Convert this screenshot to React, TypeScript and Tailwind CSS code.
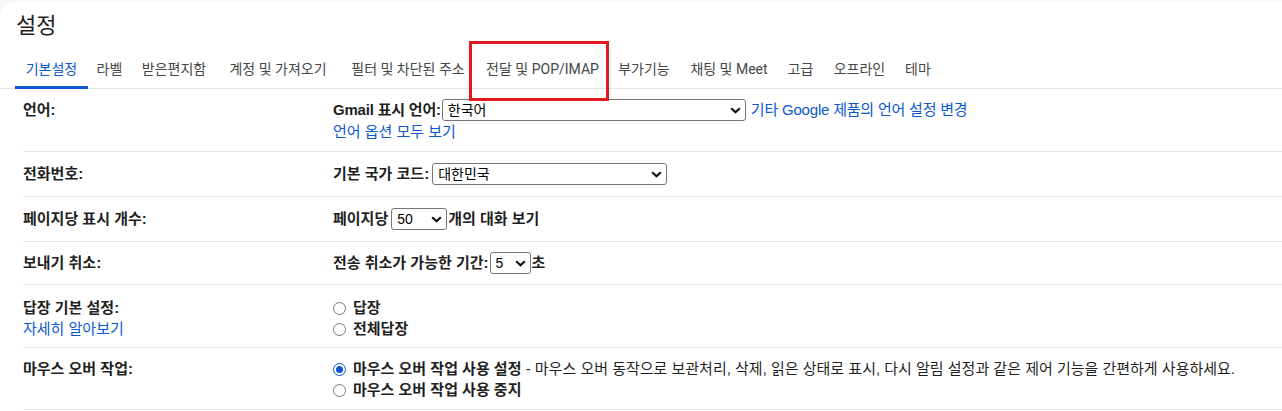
import React from "react";

const body = { fontFamily: '"Liberation Sans", Arial, "Noto Sans CJK KR", sans-serif' };
const tabFont = { fontFamily: 'Roboto, "Noto Sans CJK KR", sans-serif' };

function Chevron() {
  return (
    <svg width="11" height="7" viewBox="0 0 11 7" className="shrink-0">
      <path d="M1.2 1.2 L5.5 5.3 L9.8 1.2" fill="none" stroke="#111" strokeWidth="2.2" />
    </svg>
  );
}

function Select({ value, className }: { value: string; className: string }) {
  return (
    <div
      className={`flex h-[22px] items-center justify-between rounded-[3px] border border-[#767676] bg-white pl-[5px] pr-[4px] text-[14px] font-normal text-black ${className}`}
    >
      <span>{value}</span>
      <Chevron />
    </div>
  );
}

function Radio({ checked }: { checked?: boolean }) {
  return checked ? (
    <span className="flex h-[13px] w-[13px] shrink-0 items-center justify-center rounded-full border border-[#0b57d0] bg-white">
      <span className="h-[7px] w-[7px] rounded-full bg-[#0b57d0]" />
    </span>
  ) : (
    <span className="h-[13px] w-[13px] shrink-0 rounded-full border border-[#767676] bg-white" />
  );
}

const tabs: { label: string; w: string; active?: boolean }[] = [
  { label: "기본설정", w: "w-[73px]", active: true },
  { label: "라벨", w: "w-[43px]" },
  { label: "받은편지함", w: "w-[86px]" },
  { label: "계정 및 가져오기", w: "w-[122px]" },
  { label: "필터 및 차단된 주소", w: "w-[138px]" },
  { label: "전달 및 POP/IMAP", w: "w-[131px]" },
  { label: "부가기능", w: "w-[72px]" },
  { label: "채팅 및 Meet", w: "w-[98px]" },
  { label: "고급", w: "w-[45px]" },
  { label: "오프라인", w: "w-[73px]" },
  { label: "테마", w: "w-[44px]" },
];

function Row({
  label,
  sub,
  children,
  pad,
}: {
  label: string;
  sub?: string;
  children: React.ReactNode;
  pad: string;
}) {
  return (
    <div className={`ml-[23px] flex border-b border-[#e3e3e3] text-[15px] ${pad}`}>
      <div className="w-[310px] shrink-0 leading-[20px]">
        <div className="flex h-[22px] items-center font-bold text-[#1f1f1f]">{label}</div>
        {sub && <div className="text-[#0b57d0]">{sub}</div>}
      </div>
      <div className="flex flex-col font-bold text-[#1f1f1f]">{children}</div>
    </div>
  );
}

export default function App() {
  return (
    <div className="relative h-[411px] w-[1282px] overflow-hidden bg-[#f6f8fc]" style={body}>
      <div className="mt-[2px] h-[409px] rounded-tl-2xl bg-white text-[14px]">
        <div
          className="h-[48px] pl-[16px] pt-[10px] text-[22px] leading-[28px] text-[#1f1f1f]"
          style={tabFont}
        >
          설정
        </div>
        <div className="flex h-[39px] border-b border-[#e3e3e3] pl-[15px]" style={tabFont}>
          {tabs.map((t) => (
            <div
              key={t.label}
              className={`flex shrink-0 items-center justify-center whitespace-nowrap text-[14px] ${t.w} ${
                t.active
                  ? "-mb-px border-b-[3px] border-[#0b57d0] pt-[2px] text-[#0b57d0]"
                  : "text-[#444746]"
              }`}
            >
              {t.label}
            </div>
          ))}
        </div>

        <Row label="언어:" pad="pt-[10px] pb-[9px]">
          <div className="flex h-[22px] items-center">
            <span className="tracking-[-0.2px]">Gmail 표시 언어:</span>
            <Select value="한국어" className="ml-[1px] w-[304px]" />
            <span className="ml-[5px] font-normal tracking-[-0.2px] text-[#0b57d0]">기타 Google 제품의 언어 설정 변경</span>
          </div>
          <div className="h-[21px] leading-[21px] font-normal text-[#0b57d0]">언어 옵션 모두 보기</div>
        </Row>

        <Row label="전화번호:" pad="pt-[11px] pb-[11px]">
          <div className="flex h-[22px] items-center">
            <span>기본 국가 코드:</span>
            <Select value="대한민국" className="ml-[3px] w-[235px]" />
          </div>
        </Row>

        <Row label="페이지당 표시 개수:" pad="pt-[11px] pb-[11px]">
          <div className="flex h-[22px] items-center">
            <span>페이지당</span>
            <Select value="50" className="ml-[3px] w-[56px]" />
            <span className="ml-[1px]">개의 대화 보기</span>
          </div>
        </Row>

        <Row label="보내기 취소:" pad="pt-[10px] pb-[10px]">
          <div className="flex h-[22px] items-center">
            <span>전송 취소가 가능한 기간:</span>
            <Select value="5" className="ml-[1px] w-[41px]" />
            <span className="ml-[1px]">초</span>
          </div>
        </Row>

        <Row label="답장 기본 설정:" sub="자세히 알아보기" pad="pt-[12px] pb-[8px]">
          <div className="flex h-[22px] items-center gap-[7px]">
            <Radio />
            <span>답장</span>
          </div>
          <div className="flex h-[20px] items-center gap-[7px]">
            <Radio />
            <span>전체답장</span>
          </div>
        </Row>

        <Row label="마우스 오버 작업:" pad="pt-[10px] pb-[9px]">
          <div className="flex h-[22px] items-center gap-[7px] whitespace-nowrap">
            <Radio checked />
            <span>
              마우스 오버 작업 사용 설정
              <span className="font-normal">
                {" "}- 마우스 오버 동작으로 보관처리, 삭제, 읽은 상태로 표시, 다시 알림 설정과 같은 제어 기능을 간편하게 사용하세요.
              </span>
            </span>
          </div>
          <div className="flex h-[20px] items-center gap-[7px]">
            <Radio />
            <span>마우스 오버 작업 사용 중지</span>
          </div>
        </Row>
      </div>

      <div className="absolute left-[469px] top-[41px] h-[60px] w-[140px] border-[3px] border-[#e3191f]" />
    </div>
  );
}
